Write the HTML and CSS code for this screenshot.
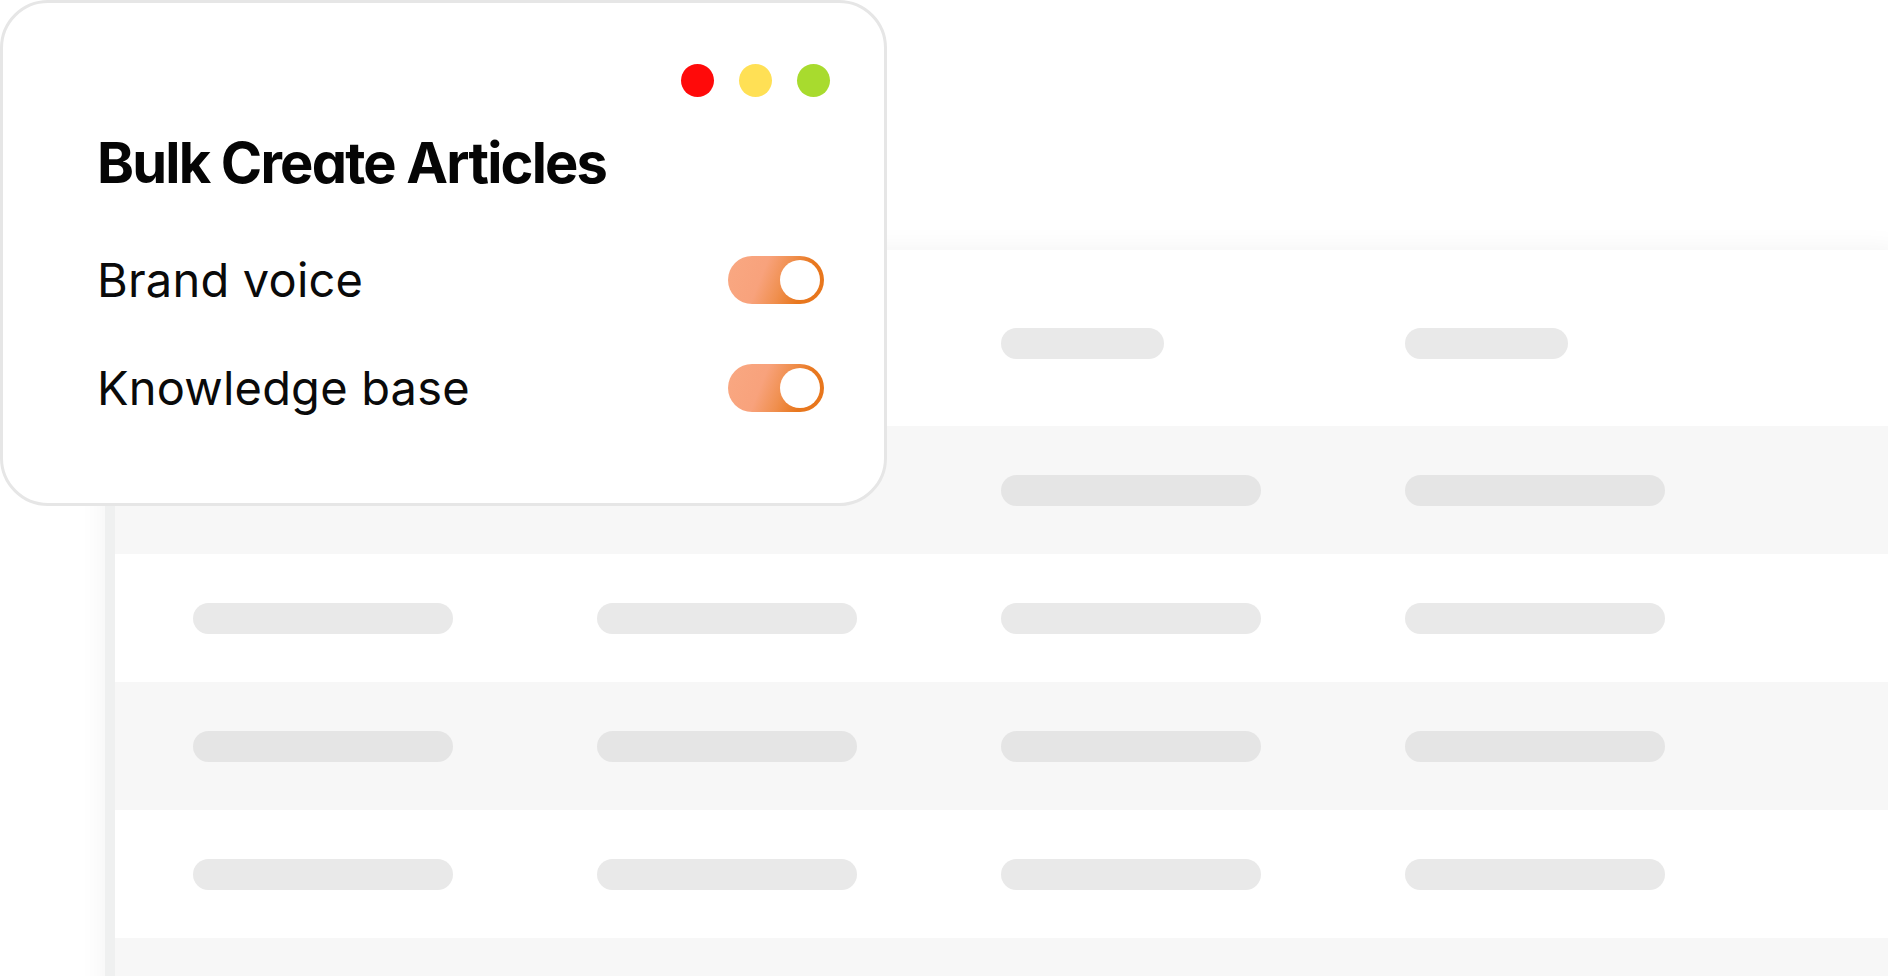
FILE: index.html
```html
<!DOCTYPE html>
<html lang="en">
<head>
<meta charset="utf-8">
<title>Bulk Create Articles</title>
<link rel="stylesheet" href="styles.css">
</head>
<body>
<div class="stage">
  <div class="table">
    <div class="row head">
      <div class="cell"><span class="pill short"></span></div>
      <div class="cell"><span class="pill short"></span></div>
      <div class="cell"><span class="pill short"></span></div>
      <div class="cell"><span class="pill short"></span></div>
    </div>
    <div class="row alt">
      <div class="cell"><span class="pill"></span></div>
      <div class="cell"><span class="pill"></span></div>
      <div class="cell"><span class="pill"></span></div>
      <div class="cell"><span class="pill"></span></div>
    </div>
    <div class="row">
      <div class="cell"><span class="pill"></span></div>
      <div class="cell"><span class="pill"></span></div>
      <div class="cell"><span class="pill"></span></div>
      <div class="cell"><span class="pill"></span></div>
    </div>
    <div class="row alt">
      <div class="cell"><span class="pill"></span></div>
      <div class="cell"><span class="pill"></span></div>
      <div class="cell"><span class="pill"></span></div>
      <div class="cell"><span class="pill"></span></div>
    </div>
    <div class="row">
      <div class="cell"><span class="pill"></span></div>
      <div class="cell"><span class="pill"></span></div>
      <div class="cell"><span class="pill"></span></div>
      <div class="cell"><span class="pill"></span></div>
    </div>
    <div class="row alt"></div>
  </div>

  <div class="card">
    <div class="dots">
      <span class="dot red"></span>
      <span class="dot yellow"></span>
      <span class="dot green"></span>
    </div>
    <h1 class="title">Bulk Create Articles</h1>
    <div class="option">
      <span class="label">Brand voice</span>
      <span class="toggle"><span class="knob"></span></span>
    </div>
    <div class="option">
      <span class="label">Knowledge base</span>
      <span class="toggle"><span class="knob"></span></span>
    </div>
  </div>
</div>
</body>
</html>
```

FILE: styles.css
```css
* { box-sizing: border-box; }

html, body {
  margin: 0;
  padding: 0;
  background: #ffffff;
  overflow: hidden;
}

body {
  width: 1888px;
  height: 976px;
  font-family: "Inter", "Noto Sans", sans-serif;
  color: #0a0a0a;
}

.stage {
  position: relative;
  width: 1888px;
  height: 976px;
  overflow: hidden;
  padding: 250px 0 0 105px;
}

/* background table */
.table {
  width: 1800px;
  height: 780px;
  background: #ffffff;
  border-left: 10px solid #eff0f0;
  border-radius: 18px;
  overflow: hidden;
  box-shadow: 0 0 28px rgba(0, 0, 0, 0.055);
}

.row {
  display: grid;
  grid-template-columns: repeat(4, 404px);
  align-items: center;
  height: 128px;
  padding-left: 78px;
  background: #ffffff;
}

.row.head {
  height: 176px;
  align-items: start;
  padding-top: 78px;
}

.row.alt { background: #f7f7f7; }

.cell { display: flex; }

.pill {
  display: block;
  width: 260px;
  height: 31px;
  border-radius: 16px;
  background: #e9e9e9;
}

.row.alt .pill { background: #e5e5e5; }

.pill.short { width: 163px; }

/* overlay card */
.card {
  position: absolute;
  top: 0;
  left: 0;
  width: 887px;
  height: 506px;
  background: #ffffff;
  border: 3px solid #e6e6e6;
  border-radius: 48px;
  padding: 61px 54px 0 94px;
  display: flex;
  flex-direction: column;
}

.dots {
  display: flex;
  justify-content: flex-end;
  gap: 25px;
  height: 33px;
}

.dot {
  width: 33px;
  height: 33px;
  border-radius: 50%;
}

.dot.red { background: #ff0a0a; }
.dot.yellow { background: #ffe055; }
.dot.green { background: #a8db2e; }

.title {
  margin: 32px 0 0 0;
  font-family: "Inter", "Noto Sans", sans-serif;
  font-size: 56px;
  line-height: 68px;
  font-weight: 700;
  letter-spacing: -1.8px;
  font-feature-settings: "cv11" 1;
  color: #050505;
}

.option {
  display: flex;
  align-items: center;
  justify-content: space-between;
  height: 48px;
  margin-top: 59px;
  padding-right: 6px;
}

.option + .option { margin-top: 60px; }

.label {
  font-size: 47px;
  line-height: 48px;
  font-weight: 400;
  letter-spacing: 0.2px;
  color: #0a0a0a;
}

.toggle {
  position: relative;
  display: block;
  width: 96px;
  height: 48px;
  border-radius: 24px;
  background: linear-gradient(112deg, #f9a882 0%, #f8a27c 36%, #f09050 56%, #e8771e 76%, #e8761c 100%);
}

.knob {
  position: absolute;
  top: 4px;
  right: 4px;
  width: 40px;
  height: 40px;
  border-radius: 50%;
  background: #ffffff;
}
```
